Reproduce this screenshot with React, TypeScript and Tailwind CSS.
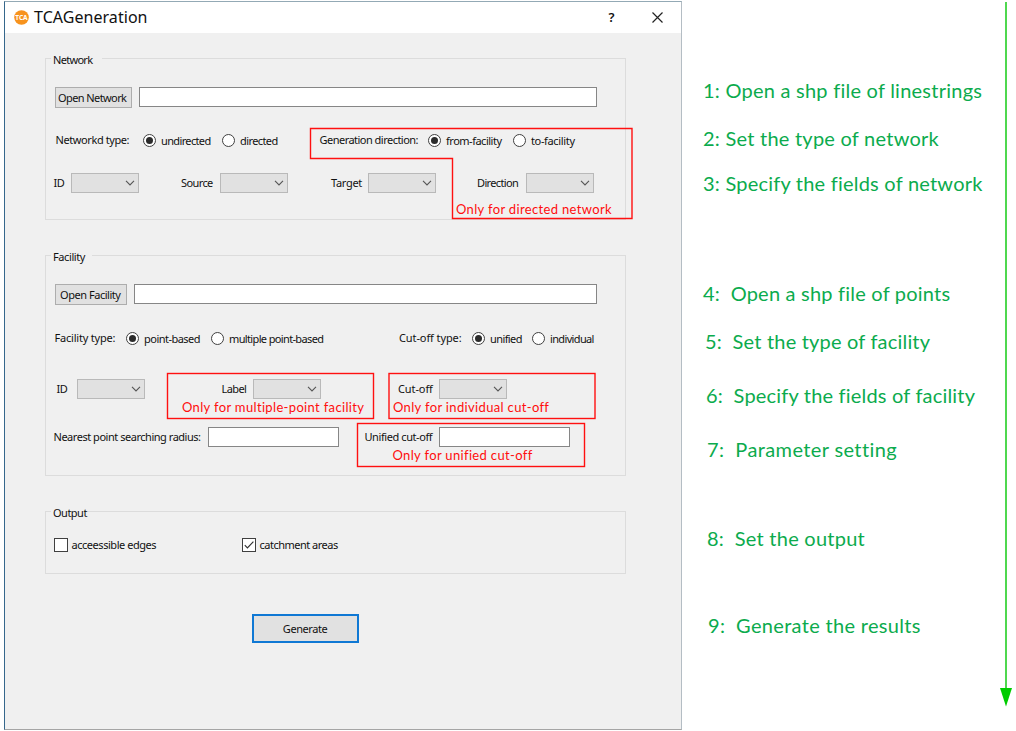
import React, { useState } from 'react';
import clsx from 'clsx';

function Group({ title, className, legendClass, children }: { title: string; className: string; legendClass: string; children: React.ReactNode }) {
  return (
    <section className={clsx('relative flex w-[581px] flex-col border border-[#dcdcdc]', className)}>
      <h2 className={clsx('absolute -top-[8px] left-[5px] h-4 bg-[#f0f0f0] pl-[2px] leading-[17px]', legendClass)}>{title}</h2>
      {children}
    </section>
  );
}

function Text({ className, children }: { className: string; children: React.ReactNode }) {
  return <span className={clsx('shrink-0 whitespace-nowrap leading-4', className)}>{children}</span>;
}

function Select({ className }: { className?: string }) {
  return (
    <button className={clsx('flex h-5 w-[68px] shrink-0 items-center justify-end border border-[#b9b9b9] bg-[#e1e1e1] pr-[3px]', className)}>
      <svg width="10" height="6" viewBox="0 0 10 6" fill="none" stroke="#555" strokeWidth="1.1">
        <path d="M1 0.9 L5 4.9 L9 0.9" />
      </svg>
    </button>
  );
}

function Input({ className }: { className: string }) {
  return <input className={clsx('h-5 shrink-0 border border-[#868686] bg-white outline-none', className)} />;
}

function Radio({ checked, onSelect, className, textClass, children }: { checked: boolean; onSelect: () => void; className: string; textClass: string; children: React.ReactNode }) {
  return (
    <button role="radio" aria-checked={checked} onClick={onSelect} className={clsx('flex h-4 shrink-0 items-center gap-[5px]', className)}>
      <span className="flex size-[13px] shrink-0 items-center justify-center rounded-full border border-[#404040] bg-white">
        {checked && <span className="size-[7px] rounded-full bg-[#2b2b2b]" />}
      </span>
      <span className={clsx('whitespace-nowrap leading-4 pt-px', textClass)}>{children}</span>
    </button>
  );
}

function Checkbox({ initial = false, className, textClass, children }: { initial?: boolean; className: string; textClass: string; children: React.ReactNode }) {
  const [on, setOn] = useState(initial);
  return (
    <button role="checkbox" aria-checked={on} onClick={() => setOn(!on)} className={clsx('flex h-[14px] shrink-0 items-center gap-[3.5px]', className)}>
      <span className="flex size-[14px] shrink-0 items-center justify-center border border-[#404040] bg-white">
        {on && (
          <svg width="12" height="12" viewBox="0 0 12 12" fill="none" stroke="#333" strokeWidth="1.2">
            <path d="M1.8 6.2 L4.4 8.8 L10.4 2.6" />
          </svg>
        )}
      </span>
      <span className={clsx('whitespace-nowrap leading-4', textClass)}>{children}</span>
    </button>
  );
}

const notes = [
  { text: '1: Open a shp file of linestrings', cls: 'mt-[78px] ml-[21px] tracking-[0.24px]' },
  { text: '2: Set the type of network', cls: 'mt-[24px] ml-[21px] tracking-[0.24px]' },
  { text: '3: Specify the fields of network', cls: 'mt-[21px] ml-[21px] tracking-[0.22px]' },
  { text: '4:  Open a shp file of points', cls: 'mt-[86px] ml-[21px] tracking-[0.21px]' },
  { text: '5:  Set the type of facility', cls: 'mt-[24px] ml-[23px] tracking-[0.19px]' },
  { text: '6:  Specify the fields of facility', cls: 'mt-[30px] ml-[24px] tracking-[0.19px]' },
  { text: '7:  Parameter setting', cls: 'mt-[30px] ml-[25px] tracking-[0.38px]' },
  { text: '8:  Set the output', cls: 'mt-[65px] ml-[25px] tracking-[0.24px]' },
  { text: '9:  Generate the results', cls: 'mt-[63px] ml-[26px] tracking-[0.32px]' },
];

const callout = "absolute whitespace-nowrap font-['Lato','Noto_Sans',sans-serif] text-[13px] leading-4 tracking-[0.34px] text-[#ff0d0d]";

export default function App() {
  const [netType, setNetType] = useState('undirected');
  const [direction, setDirection] = useState('from');
  const [facType, setFacType] = useState('point');
  const [cutoff, setCutoff] = useState('unified');

  return (
    <div className="flex h-[731px] w-[1016px] overflow-hidden bg-white font-['Noto_Sans',sans-serif] text-[11px] text-[#111]">
      <main className="relative mt-px ml-[4px] flex h-[729px] w-[678px] shrink-0 flex-col border border-t-[#93a9b5] border-r-[#b4bdc4] border-b-[#a5a5a5] border-l-[#35678c] bg-[#f0f0f0]">
        <header className="flex h-[31px] shrink-0 items-center bg-white pl-[9px]">
          <svg width="15" height="15" viewBox="0 0 15 15">
            <circle cx="7.5" cy="7.5" r="7.3" fill="#f7931e" />
            <text x="7.5" y="9.8" textAnchor="middle" fontSize="6.6" fontWeight="700" fill="#fff" textLength="12.4">TCA</text>
          </svg>
          <h1 className="ml-[5px] w-[573px] pb-[2px] text-[16px] leading-5 tracking-[0.05px]">TCAGeneration</h1>
          <button className="w-[9px] pb-px text-[13px] leading-4 font-semibold">?</button>
          <svg className="ml-[36px]" width="11" height="11" viewBox="0 0 11 11" stroke="#222" strokeWidth="1.2">
            <path d="M0.5 0.5 L10.5 10.5 M10.5 0.5 L0.5 10.5" />
          </svg>
        </header>

        <div className="flex flex-col pl-[40px]">
          <Group title="Network" legendClass="w-[51px] tracking-[-0.7px]" className="mt-[25px] h-[162px]">
            <div className="mt-[28px] flex pl-[9px]">
              <button className="h-[21px] w-[77px] border border-[#adadad] bg-[#e1e1e1] text-left pl-[2px] leading-[19px] tracking-[-0.59px] whitespace-nowrap">Open Network</button>
              <Input className="ml-[7px] w-[458px]" />
            </div>
            <div className="mt-[24px] flex h-4 items-center pl-[9px]">
              <Text className="w-[88px] pl-[0.5px] tracking-[-0.41px]">Networkd type:</Text>
              <Radio className="w-[79px]" textClass="tracking-[-0.64px]" checked={netType === 'undirected'} onSelect={() => setNetType('undirected')}>undirected</Radio>
              <Radio className="w-[97px]" textClass="tracking-[-0.6px]" checked={netType === 'directed'} onSelect={() => setNetType('directed')}>directed</Radio>
              <Text className="w-[109px] pl-[0.5px] tracking-[-0.52px]">Generation direction:</Text>
              <Radio className="w-[85px]" textClass="tracking-[-0.49px]" checked={direction === 'from'} onSelect={() => setDirection('from')}>from-facility</Radio>
              <Radio className="w-[64px]" textClass="tracking-[-0.35px]" checked={direction === 'to'} onSelect={() => setDirection('to')}>to-facility</Radio>
            </div>
            <div className="mt-[25px] flex h-5 items-center pl-[7px]">
              <Text className="w-[18px] pl-[0.5px] tracking-[-0.6px]">ID</Text>
              <Select />
              <Text className="ml-[42px] w-[39px] tracking-[-0.6px]">Source</Text>
              <Select />
              <Text className="ml-[43px] w-[37px] tracking-[-0.3px]">Target</Text>
              <Select />
              <Text className="ml-[41px] w-[49px] tracking-[-0.65px]">Direction</Text>
              <Select />
            </div>
          </Group>

          <Group title="Facility" legendClass="w-[41px] tracking-[-0.4px]" className="mt-[35px] h-[221px]">
            <div className="mt-[28px] flex pl-[9px]">
              <button className="h-[21px] w-[72px] border border-[#adadad] bg-[#e1e1e1] text-left pl-[4px] leading-[19px] tracking-[-0.46px] whitespace-nowrap">Open Facility</button>
              <Input className="ml-[7px] w-[463px]" />
            </div>
            <div className="mt-[25px] flex h-4 items-center pl-[8px]">
              <Text className="w-[72px] pl-[0.5px] tracking-[-0.2px]">Facility type:</Text>
              <Radio className="w-[85px]" textClass="tracking-[-0.52px]" checked={facType === 'point'} onSelect={() => setFacType('point')}>point-based</Radio>
              <Radio className="w-[188px]" textClass="tracking-[-0.64px]" checked={facType === 'multiple'} onSelect={() => setFacType('multiple')}>multiple point-based</Radio>
              <Text className="w-[73px] tracking-[-0.1px]">Cut-off type:</Text>
              <Radio className="w-[60px]" textClass="tracking-[-0.6px]" checked={cutoff === 'unified'} onSelect={() => setCutoff('unified')}>unified</Radio>
              <Radio className="w-[64px]" textClass="tracking-[-0.65px]" checked={cutoff === 'individual'} onSelect={() => setCutoff('individual')}>individual</Radio>
            </div>
            <div className="mt-[33px] flex h-5 items-center pl-[10px]">
              <Text className="w-[21px] pl-[0.5px] tracking-[-0.6px]">ID</Text>
              <Select />
              <Text className="ml-[76px] w-[32px] pl-[0.5px] tracking-[-0.6px]">Label</Text>
              <Select />
              <Text className="ml-[77px] w-[41px] tracking-[-0.1px]">Cut-off</Text>
              <Select />
            </div>
            <div className="mt-[28px] flex h-5 items-center pl-[7px]">
              <Text className="w-[155px] pl-[0.5px] tracking-[-0.47px]">Nearest point searching radius:</Text>
              <Input className="w-[131px]" />
              <Text className="ml-[25px] w-[75px] pl-[0.5px] tracking-[-0.42px]">Unified cut-off</Text>
              <Input className="w-[131px]" />
            </div>
          </Group>

          <Group title="Output" legendClass="w-[37px] tracking-[-0.5px]" className="mt-[35px] h-[63px]">
            <div className="mt-[26px] flex pl-[8px]">
              <Checkbox className="w-[188px]" textClass="tracking-[-0.46px]">acceessible edges</Checkbox>
              <Checkbox className="w-[110px]" textClass="tracking-[-0.5px]" initial>catchment areas</Checkbox>
            </div>
          </Group>

          <button className="mt-[40px] ml-[207px] h-[29px] w-[107px] border-2 border-[#0f78d4] bg-[#e1e1e1] pr-px leading-4 tracking-[-0.44px]">Generate</button>
        </div>

        {/* Callout outlines and their captions lie over the form */}
        <svg className="pointer-events-none absolute -top-[2px] -left-[5px]" width="682" height="731" fill="none" stroke="#ff1010" strokeWidth="1.4">
          <path d="M310.5 128.5 H632 V218.5 H452.5 V158.5 H310.5 Z" />
          <rect x="167.5" y="373.5" width="206" height="45" />
          <rect x="389" y="373.5" width="206" height="45" />
          <rect x="357.5" y="423.5" width="227" height="43" />
        </svg>
        <span className={clsx(callout, 'top-[199px] left-[451px]')}>Only for directed network</span>
        <span className={clsx(callout, 'top-[397px] left-[177px]')}>Only for multiple-point facility</span>
        <span className={clsx(callout, 'top-[397px] left-[388px]')}>Only for individual cut-off</span>
        <span className={clsx(callout, 'top-[445px] left-[387.5px]')}>Only for unified cut-off</span>
      </main>

      <aside className="flex w-[318px] shrink-0 flex-col font-['Lato','Noto_Sans',sans-serif] text-[20px] text-[#0bab4d]">
        {notes.map((n) => (
          <p key={n.text} className={clsx('h-6 shrink-0 leading-6 whitespace-pre', n.cls)}>{n.text}</p>
        ))}
      </aside>

      <svg className="shrink-0" width="16" height="731" viewBox="0 0 16 731">
        <path d="M6 2 V690" stroke="#4fd84f" strokeWidth="2" />
        <path d="M0 688 H12 L6 706.5 Z" fill="#00cc00" />
      </svg>
    </div>
  );
}
